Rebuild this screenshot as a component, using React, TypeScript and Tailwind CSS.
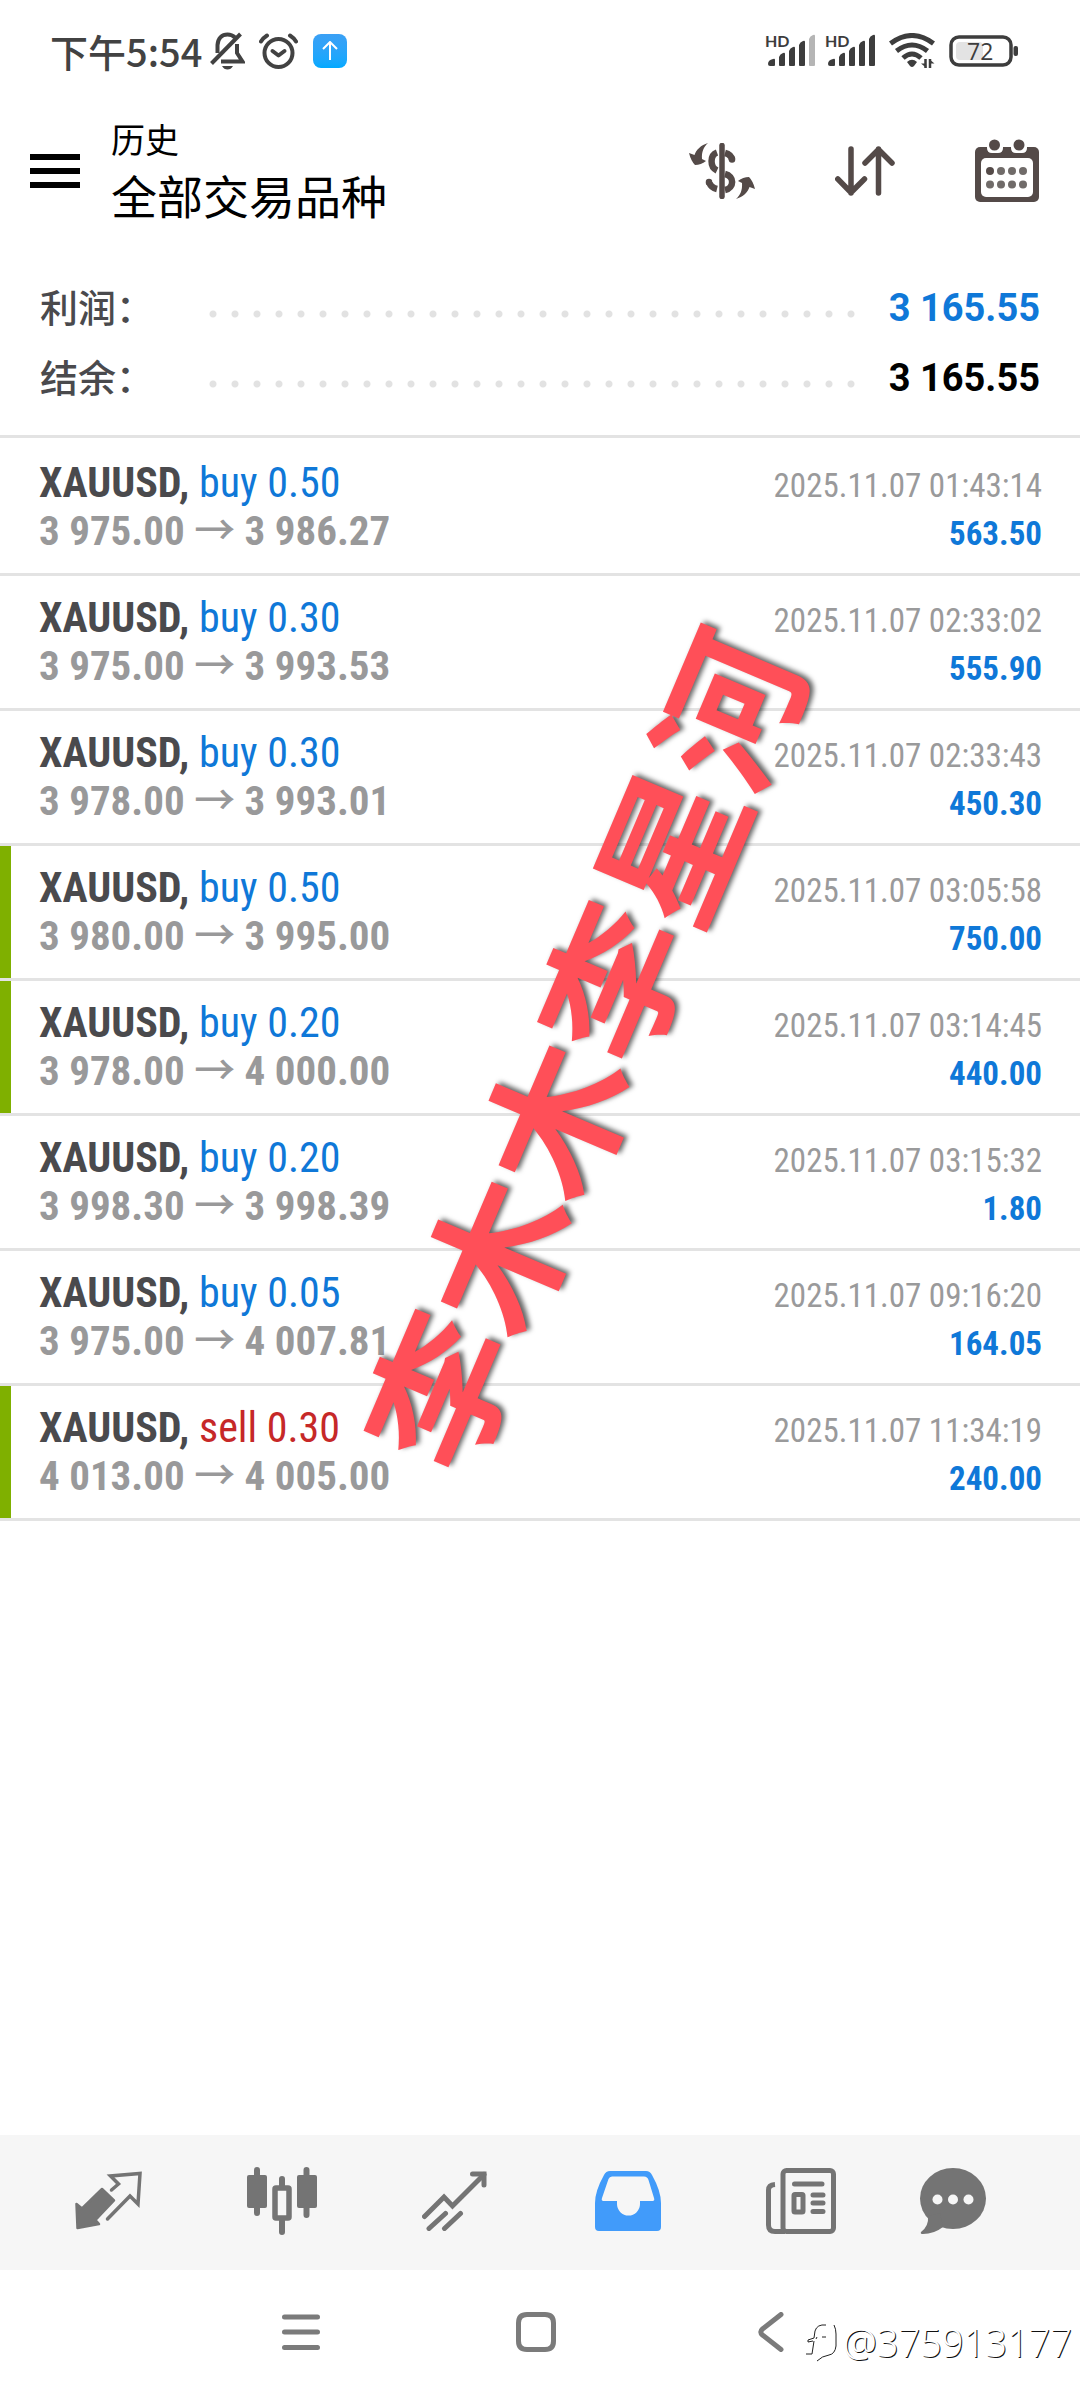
import React from 'react';

interface Deal {
  symbol: string;
  side: 'buy' | 'sell';
  volume: string;
  open: string;
  close: string;
  time: string;
  profit: string;
  marked?: boolean;
}

const deals: Deal[] = [
  { symbol: 'XAUUSD', side: 'buy', volume: '0.50', open: '3 975.00', close: '3 986.27', time: '2025.11.07 01:43:14', profit: '563.50' },
  { symbol: 'XAUUSD', side: 'buy', volume: '0.30', open: '3 975.00', close: '3 993.53', time: '2025.11.07 02:33:02', profit: '555.90' },
  { symbol: 'XAUUSD', side: 'buy', volume: '0.30', open: '3 978.00', close: '3 993.01', time: '2025.11.07 02:33:43', profit: '450.30' },
  { symbol: 'XAUUSD', side: 'buy', volume: '0.50', open: '3 980.00', close: '3 995.00', time: '2025.11.07 03:05:58', profit: '750.00', marked: true },
  { symbol: 'XAUUSD', side: 'buy', volume: '0.20', open: '3 978.00', close: '4 000.00', time: '2025.11.07 03:14:45', profit: '440.00', marked: true },
  { symbol: 'XAUUSD', side: 'buy', volume: '0.20', open: '3 998.30', close: '3 998.39', time: '2025.11.07 03:15:32', profit: '1.80' },
  { symbol: 'XAUUSD', side: 'buy', volume: '0.05', open: '3 975.00', close: '4 007.81', time: '2025.11.07 09:16:20', profit: '164.05' },
  { symbol: 'XAUUSD', side: 'sell', volume: '0.30', open: '4 013.00', close: '4 005.00', time: '2025.11.07 11:34:19', profit: '240.00', marked: true },
];

const Signal: React.FC<{ weak?: boolean }> = ({ weak }) => (
  <svg className="overflow-visible" width="50" height="34" viewBox="0 0 50 34" fill="#3d3d3d">
    <text x="-1" y="13" fontSize="16" fontWeight="700" fontFamily="Lato, sans-serif">HD</text>
    <path d="M2 30Q2 26 7 25Q9 24 9 26V31Q9 32 8 32H4Q2 32 2 30Z" />
    <path d="M13 23Q14 20 17 19Q19 18 19 20V31Q19 32 18 32H14Q13 32 13 31Z" />
    <path d="M23 17Q24 14 27 13Q29 12 29 14V31Q29 32 28 32H24Q23 32 23 31Z" />
    <path d="M33 11Q34 8 37 7Q39 6 39 8V31Q39 32 38 32H34Q33 32 33 31Z" />
    <path d="M43 5Q44 2 47 1Q49 0 49 2V31Q49 32 48 32H44Q43 32 43 31Z" fill={weak ? '#b5b5b5' : '#3d3d3d'} />
  </svg>
);

const StatusBar = () => (
  <div className="flex h-[102px] items-center justify-between pr-[61px] pl-[50px] text-[#424242]">
    <div className="flex items-center">
      <span className="text-[38px] leading-10 font-medium">下午5:54</span>
      <svg className="ml-2" width="35" height="38" viewBox="0 0 35 38" fill="none" stroke="currentColor" strokeWidth="4">
        <path d="M7.500 21V13C8 6 12 2.500 17.500 2.500C20.500 2.500 23 3.500 25 5.500" />
        <path d="M27 12V21L32.500 29.500H11" />
        <path d="M1.500 31.500L30.500 2" />
        <path d="M12 34H23Q21 37.500 17.500 37.500T12 34Z" fill="currentColor" stroke="none" />
      </svg>
      <svg className="ml-[14px]" width="39" height="36" viewBox="0 0 39 36" fill="none" stroke="currentColor" strokeWidth="4" strokeLinecap="round">
        <circle cx="19.500" cy="20" r="14" />
        <path d="M13.500 18L19.500 22.500L25.500 18" strokeLinejoin="round" />
        <path d="M2 8.500Q4 5 8 2.500M31 2.500Q35 5 37 8.500" />
      </svg>
      <span className="ml-[15px] flex size-[34px] items-center justify-center rounded-lg bg-gradient-to-b from-[#3aa0f5] to-[#00a9ff]">
        <svg width="18" height="20" viewBox="0 0 18 20" fill="none" stroke="#ffffff" strokeWidth="2">
          <path d="M9 1V19M2 8L9 1L16 8" />
        </svg>
      </span>
    </div>
    <div className="flex items-center">
      <Signal weak />
      <span className="ml-[10px] flex"><Signal /></span>
      <svg className="ml-[13px]" width="46" height="36" viewBox="0 0 46 36" fill="none" stroke="#3d3d3d" strokeWidth="5">
        <path d="M1.500 10.500Q23 -5.500 44.500 10.500" />
        <path d="M7.500 18Q23 6 38.500 18" />
        <path d="M14 25Q23 17 32 25" />
        <path d="M18 29Q23 24.500 28 29L25 33Q23 35 21 33Z" fill="#3d3d3d" stroke="none" />
        <path d="M36.500 26V35M41 35V26" strokeWidth="2.500" />
        <path d="M37.500 35L32 30.500H37ZM40 26L45.500 30.500H40Z" fill="#3d3d3d" stroke="none" />
      </svg>
      <svg className="ml-[14px] overflow-visible" width="70" height="32" viewBox="0 0 70 32" fill="none">
        <rect x="2" y="2" width="60" height="28" rx="8" stroke="#3d3d3d" strokeWidth="3.500" />
        <rect x="7" y="7" width="27" height="18" rx="4" fill="#e3e3e3" />
        <rect x="64.500" y="11" width="4.500" height="10" rx="2" fill="#3d3d3d" />
        <text x="18" y="24.500" fontSize="23" fontWeight="500" fill="#3d3d3d" fontFamily="'Open Sans', sans-serif">72</text>
      </svg>
    </div>
  </div>
);

const Header = () => (
  <header className="flex h-[138px] items-center pr-[41px] pl-[30px] text-black">
    <button aria-label="菜单" className="flex w-[50px] flex-col gap-2">
      <span className="h-[6px] bg-black" />
      <span className="h-[6px] bg-black" />
      <span className="h-[6px] bg-black" />
    </button>
    <div className="ml-[31px] flex-1 pb-[5px]">
      <p className="text-[34px] leading-[50px]">历史</p>
      <h1 className="text-[46px] leading-[60px]">全部交易品种</h1>
    </div>
    <div className="flex items-center gap-20 text-[#544a48]">
      <button aria-label="货币">
        <svg width="66" height="56" viewBox="0 0 66 56" fill="none" stroke="currentColor" strokeWidth="6.500">
          <path d="M33 2.500V53.500" strokeWidth="5.500" strokeLinecap="round" />
          <path d="M28 9.500C21 12 20.500 24 28 27.500" />
          <path d="M36 10Q42 11.500 43 16.500" />
          <path d="M43 16V16.500" strokeLinecap="round" />
          <path d="M36 31C45.500 33 45.500 45 36 47" />
          <path d="M28 46Q22 44.500 20.500 40" />
          <path d="M20 39V39.500" strokeLinecap="round" />
          <path d="M19 0C12 2 7 7 5.500 12L0 10Q2 18 6 22Q12 22 17 18L13 16C12.500 9 14.500 4 19 0Z" fill="currentColor" stroke="none" />
          <path d="M47 56C54 54 59 49 60.500 44L66 46Q64 38 60 34Q54 34 49 38L53 40C53.500 47 51.500 52 47 56Z" fill="currentColor" stroke="none" />
        </svg>
      </button>
      <button aria-label="排序">
        <svg width="60" height="50" viewBox="0 0 60 50" fill="none" stroke="currentColor" strokeWidth="5.500" strokeLinecap="round" strokeLinejoin="round">
          <path d="M16 3V47M2.800 33L16 46.500L29.500 33" />
          <path d="M43.500 47V3M30 17L43.500 3.500L57 17" />
        </svg>
      </button>
      <button aria-label="日期">
        <svg width="64" height="64" viewBox="0 0 64 64" fill="currentColor">
          <rect y="8" width="64" height="55" rx="5" />
          <path d="M12 6V9Q12 14 17 14H23Q28 14 28 9V6ZM36 6V9Q36 14 41 14H47Q52 14 52 9V6Z" fill="#ffffff" />
          <circle cx="19.500" cy="6" r="5.500" />
          <circle cx="44" cy="6" r="5.500" />
          <rect x="6" y="19" width="52" height="39" rx="5" fill="#ffffff" />
          <circle cx="15" cy="32" r="4" />
          <g fill="#706b69">
            <circle cx="26" cy="32" r="4" />
            <circle cx="37" cy="32" r="4" />
            <circle cx="48" cy="32" r="4" />
            <circle cx="15" cy="45.500" r="4" />
            <circle cx="26" cy="45.500" r="4" />
            <circle cx="37" cy="45.500" r="4" />
            <circle cx="48" cy="45.500" r="4" />
          </g>
        </svg>
      </button>
    </div>
  </header>
);

const SummaryRow: React.FC<{ label: string; value: string; profit?: boolean }> = ({ label, value, profit }) => (
  <div className="flex h-[70px] items-center">
    <dt className="w-[162px] text-[38px] leading-10 font-medium text-[#4a4a4d]">{label}</dt>
    <dd className="flex flex-1 items-center">
      <span className="mt-4 h-2 flex-1 bg-[radial-gradient(circle,#e2e2e2_3px,transparent_4px)] bg-[length:22px_8px]" />
      <span className={`mt-1 ml-[26px] font-['Roboto'] text-[38px] leading-10 font-bold ${profit ? 'text-[#0f78d8]' : 'text-black'}`}>{value}</span>
    </dd>
  </div>
);

const DealRow: React.FC<{ deal: Deal }> = ({ deal }) => (
  <li className="flex border-b-[3px] border-[#e3e3e3]">
    <span className={`w-[11px] ${deal.marked ? 'bg-[#7fb000]' : ''}`} />
    <div className="flex-1 py-[18px] pr-[38px] pl-7 font-['Roboto_Condensed','Noto_Sans_CJK_SC',sans-serif] leading-[48px]">
      <div className="flex h-12 items-baseline justify-between">
        <span className="text-[42px]">
          <b className="font-bold text-[#4a4a4d]">{deal.symbol},</b>{' '}
          <span className={deal.side === 'buy' ? 'text-[#0f78d8]' : 'text-[#c62828]'}>{deal.side} {deal.volume}</span>
        </span>
        <time className="text-[33px] text-[#9a9a9b]">{deal.time}</time>
      </div>
      <div className="flex h-12 items-baseline justify-between font-bold">
        <span className="text-[41px] text-[#99999a]">
          {deal.open} <span className="font-medium">→</span> {deal.close}
        </span>
        <span className="text-[33px] text-[#0f78d8]">{deal.profit}</span>
      </div>
    </div>
  </li>
);

const TabBar = () => (
  <nav className="flex h-[135px] items-center bg-[#f6f6f6] pr-[61px] pb-1 pl-[22px] text-[#747474]">
    <button aria-label="行情" className="flex flex-1 justify-center">
      <svg width="67" height="60" viewBox="0 0 67 60" fill="none" stroke="currentColor" strokeWidth="3.500" strokeLinejoin="round" strokeLinecap="round">
        <path d="M1.500 33L7 37.500L27 18L39 29.500L20.500 49L24 53L2.500 57Z" fill="currentColor" strokeWidth="2.500" />
        <path d="M36.500 19L43.500 13L35.500 5L65 2.500L63 33L55 25L32.500 48" strokeLinejoin="miter" />
      </svg>
    </button>
    <button aria-label="图表" className="flex flex-1 justify-center">
      <svg width="70" height="68" viewBox="0 0 70 68" fill="none" stroke="currentColor" strokeWidth="6" strokeLinecap="round">
        <path d="M10 3V46M35 12V20M35 54V65M59.500 3V48" />
        <rect x="0" y="8" width="20" height="33" rx="2" fill="currentColor" stroke="none" />
        <rect x="50" y="8" width="20" height="33" rx="2" fill="currentColor" stroke="none" />
        <rect x="28" y="21" width="14" height="30" rx="1" strokeWidth="5.500" />
      </svg>
    </button>
    <button aria-label="交易" className="flex flex-1 justify-center">
      <svg width="65" height="60" viewBox="0 0 65 60" fill="none" stroke="currentColor" strokeWidth="5" strokeLinecap="round">
        <path d="M2.500 45.500L22 26L30.500 35L62 3.500" />
        <path d="M50.500 3H62V14" />
        <path d="M23.500 42.500L7 57.500M38.500 42.500L22.500 57.500" />
      </svg>
    </button>
    <button aria-label="历史" className="flex flex-1 justify-center text-[#419bfa]">
      <svg width="66" height="60" viewBox="0 0 66 60" fill="currentColor" fillRule="evenodd">
        <path d="M15 0H51Q55 0 57 4Q66 20 66 32V56Q66 60 62 60H4Q0 60 0 56V32Q0 20 9 4Q11 0 15 0ZM17 5.500Q14.500 5.500 13.500 8L7 27Q6 30 8.500 30H22V33A11.500 11.500 0 0 0 45 33V30H57.500Q60 30 59 27L53.500 9Q52.500 5.500 49 5.500Z" />
      </svg>
    </button>
    <button aria-label="新闻" className="flex flex-1 justify-center">
      <svg width="70" height="66" viewBox="0 0 70 66" fill="none" stroke="currentColor" strokeWidth="5" strokeLinecap="round">
        <rect x="17" y="2.500" width="50.500" height="61" rx="3.500" />
        <path d="M9 16.500Q2.500 17 2.500 22V57Q2.500 63.500 9 63.500H19" strokeLinecap="butt" />
        <path d="M28.500 16H56M47 27H57M47 35H57M47 43.500H57" />
        <rect x="28" y="26.500" width="9" height="17.500" rx="1" />
      </svg>
    </button>
    <button aria-label="消息" className="flex w-[132px] justify-center">
      <svg width="66" height="66" viewBox="0 0 66 66" fill="currentColor">
        <ellipse cx="33" cy="30.500" rx="33" ry="30.500" />
        <path d="M8 48Q9 58 1 64Q0 66 3 66Q14 66 23 59L20 45Z" />
        <g fill="#f6f6f6">
          <circle cx="17.500" cy="31.500" r="5" />
          <circle cx="33" cy="31.500" r="5" />
          <circle cx="48.500" cy="31.500" r="5" />
        </g>
      </svg>
    </button>
  </nav>
);

const SystemNav = () => (
  <div className="relative flex h-[130px] justify-center pr-2 pb-[6px] text-[#7b7b7b]">
    <button aria-label="最近任务" className="flex w-[235px] items-center justify-center">
      <svg width="38" height="40" viewBox="0 0 38 40" stroke="currentColor" strokeWidth="5" strokeLinecap="round">
        <path d="M2.500 5H35.500M2.500 20H35.500M2.500 35.500H35.500" />
      </svg>
    </button>
    <button aria-label="主屏幕" className="flex w-[235px] items-center justify-center">
      <svg width="40" height="40" viewBox="0 0 40 40" fill="none" stroke="currentColor" strokeWidth="5">
        <path d="M11 2.500H29Q37.500 2.500 37.500 11V29Q37.500 37.500 29 37.500H11Q2.500 37.500 2.500 29V11Q2.500 2.500 11 2.500Z" />
      </svg>
    </button>
    <button aria-label="返回" className="flex w-[235px] items-center justify-center">
      <svg width="26" height="40" viewBox="0 0 26 40" fill="none" stroke="currentColor" strokeWidth="5" strokeLinecap="round">
        <path d="M23 2.500L4.500 17Q1 20 4.500 23L23 37.500" />
      </svg>
    </button>
    <div className="absolute right-2 bottom-[38px] flex items-center gap-[5px] text-white">
      <svg width="32" height="40" viewBox="0 0 32 40" fill="none" stroke="#222222" strokeWidth="1">
        <path d="M20 3Q11 2 9 9L8 16L2 18M2 18V20L7 19M8 19L6 32L0 32M16 15H20M10 17L11 15" />
        <path d="M28 3Q30 7 30 12V24Q29 32 23 33Q16 34 11 39" />
      </svg>
      <span className="font-['Noto_Sans'] text-[38px] leading-10 font-light [text-shadow:1px_1px_0_#111111]">@375913177</span>
    </div>
  </div>
);

export default function App() {
  return (
    <div className="flex min-h-screen flex-col overflow-hidden bg-white font-['Noto_Sans_CJK_SC',sans-serif]">
      <StatusBar />
      <Header />
      <main className="flex-1">
        <dl className="border-b-[3px] border-[#e3e3e3] px-10 pt-[31px] pb-6">
          <SummaryRow label="利润：" value="3 165.55" profit />
          <SummaryRow label="结余：" value="3 165.55" />
        </dl>
        <div className="relative pt-[3px]">
          <ul>
            {deals.map((deal) => (
              <DealRow key={deal.time} deal={deal} />
            ))}
          </ul>
          <p className="pointer-events-none absolute top-[610px] left-[53.5%] -translate-x-1/2 -translate-y-1/2 -rotate-[67deg] text-[148px] leading-none font-bold whitespace-nowrap text-[#ff4f58] [text-shadow:3px_3px_5px_rgba(0,0,0,0.6)]">
            李木木李星河
          </p>
        </div>
      </main>
      <TabBar />
      <SystemNav />
    </div>
  );
}
